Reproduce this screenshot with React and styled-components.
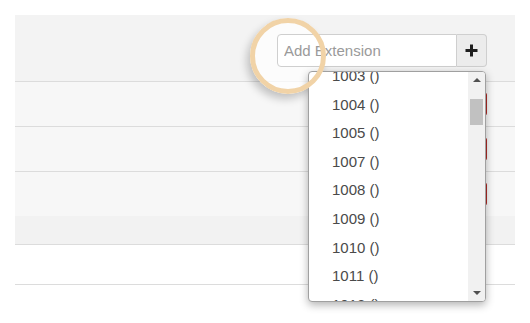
import React from 'react';
import styled, { createGlobalStyle } from 'styled-components';

const Global = createGlobalStyle`
  html, body, #root { margin: 0; padding: 0; background: #fff; min-height: 100%; }
  html, body { height: 100%; }
  body { font-family: "Liberation Sans", Arial, sans-serif; }
  * { box-sizing: border-box; }
`;

const Page = styled.div`
  padding: 15px 15px 0;
  width: 530px;
  min-height: 323px;
`;

const Panel = styled.div`
  width: 500px;
  background: #f3f3f3;
  border-bottom: 1px solid #dcdcdc;
`;

const Header = styled.div`
  display: flex;
  justify-content: flex-end;
  padding: 19px 28px 14px 0;
`;

const Group = styled.div`
  position: relative;
  display: flex;
  height: 33px;
`;

const Input = styled.input`
  position: relative;
  z-index: 2;
  width: 180px;
  height: 33px;
  border: 1px solid #cfcfcf;
  border-radius: 4px 0 0 4px;
  background: #fff;
  padding: 0 6px;
  font: 15px "Liberation Sans", Arial, sans-serif;
  color: #555;
  outline: none;
  &::placeholder { color: #9a9a9a; }
`;

const AddBtn = styled.button`
  width: 30px;
  height: 33px;
  border: 1px solid #cfcfcf;
  border-left: none;
  border-radius: 0 4px 4px 0;
  background: #ececec;
  display: flex;
  align-items: center;
  justify-content: center;
  padding: 0;
`;

const Row = styled.div`
  display: flex;
  justify-content: flex-end;
  align-items: center;
  height: 45px;
  border-top: 1px solid #dcdcdc;
  background: #f7f7f7;
  padding-right: 28px;
`;

const DangerBtn = styled.div`
  width: 30px;
  height: 24px;
  background: #c9302c;
  border: 1px solid #ac2925;
  border-radius: 3px;
`;

const Band = styled.div`
  height: 28px;
  background: #f2f2f2;
`;

const WhiteRow = styled.div`
  width: 500px;
  height: 40px;
  border-bottom: 1px solid #dcdcdc;
`;

const Dropdown = styled.div`
  position: absolute;
  left: 31px;
  top: 37px;
  width: 178px;
  height: 231px;
  background: #fff;
  border: 1px solid #a0a0a0;
  border-radius: 4px;
  box-shadow: 0 3px 8px rgba(0, 0, 0, 0.3);
  display: flex;
  overflow: hidden;
  z-index: 5;
`;

const List = styled.ul`
  flex: 1;
  list-style: none;
  margin: -10px 0 0;
  padding: 0;
`;

const Item = styled.li`
  height: 28.6px;
  line-height: 28.6px;
  padding-left: 23px;
  font-size: 15px;
  color: #4a4a4a;
  white-space: nowrap;
`;

const Scrollbar = styled.div`
  position: relative;
  width: 17px;
  background: #f1f1f1;
`;

const Arrow = styled.div`
  position: absolute;
  left: 5px;
  ${p => (p.$down ? 'bottom: 6px;' : 'top: 6px;')}
  width: 0;
  height: 0;
  border-left: 4px solid transparent;
  border-right: 4px solid transparent;
  ${p => (p.$down ? 'border-top: 4px solid #505050;' : 'border-bottom: 4px solid #505050;')}
`;

const Thumb = styled.div`
  position: absolute;
  left: 2px;
  top: 27px;
  width: 13px;
  height: 26px;
  background: #c1c1c1;
`;

const SpotFill = styled.div`
  position: absolute;
  left: -27px;
  top: -16px;
  width: 76px;
  height: 76px;
  border-radius: 50%;
  background: rgba(255, 255, 255, 0.7);
  box-shadow: -3px 5px 9px rgba(0, 0, 0, 0.22);
  z-index: 1;
  pointer-events: none;
`;

const SpotRing = styled.div`
  position: absolute;
  left: -27px;
  top: -16px;
  width: 76px;
  height: 76px;
  border-radius: 50%;
  border: 5px solid #f1d3a7;
  z-index: 6;
  pointer-events: none;
`;

const items = ['1003', '1004', '1005', '1007', '1008', '1009', '1010', '1011', '1012'];

export default function App() {
  return (
    <>
      <Global />
      <Page>
        <Panel>
          <Header>
            <Group>
              <SpotFill />
              <Input placeholder="Add Extension" />
              <AddBtn>
                <svg width="13" height="13" viewBox="0 0 13 13">
                  <path d="M6.5 0.5v12M0.5 6.5h12" stroke="#1e1e1e" strokeWidth="3" />
                </svg>
              </AddBtn>
              <Dropdown>
                <List>
                  {items.map(n => (
                    <Item key={n}>{n} ()</Item>
                  ))}
                </List>
                <Scrollbar>
                  <Arrow />
                  <Thumb />
                  <Arrow $down />
                </Scrollbar>
              </Dropdown>
              <SpotRing />
            </Group>
          </Header>
          <Row><DangerBtn /></Row>
          <Row><DangerBtn /></Row>
          <Row><DangerBtn /></Row>
          <Band />
        </Panel>
        <WhiteRow />
      </Page>
    </>
  );
}
